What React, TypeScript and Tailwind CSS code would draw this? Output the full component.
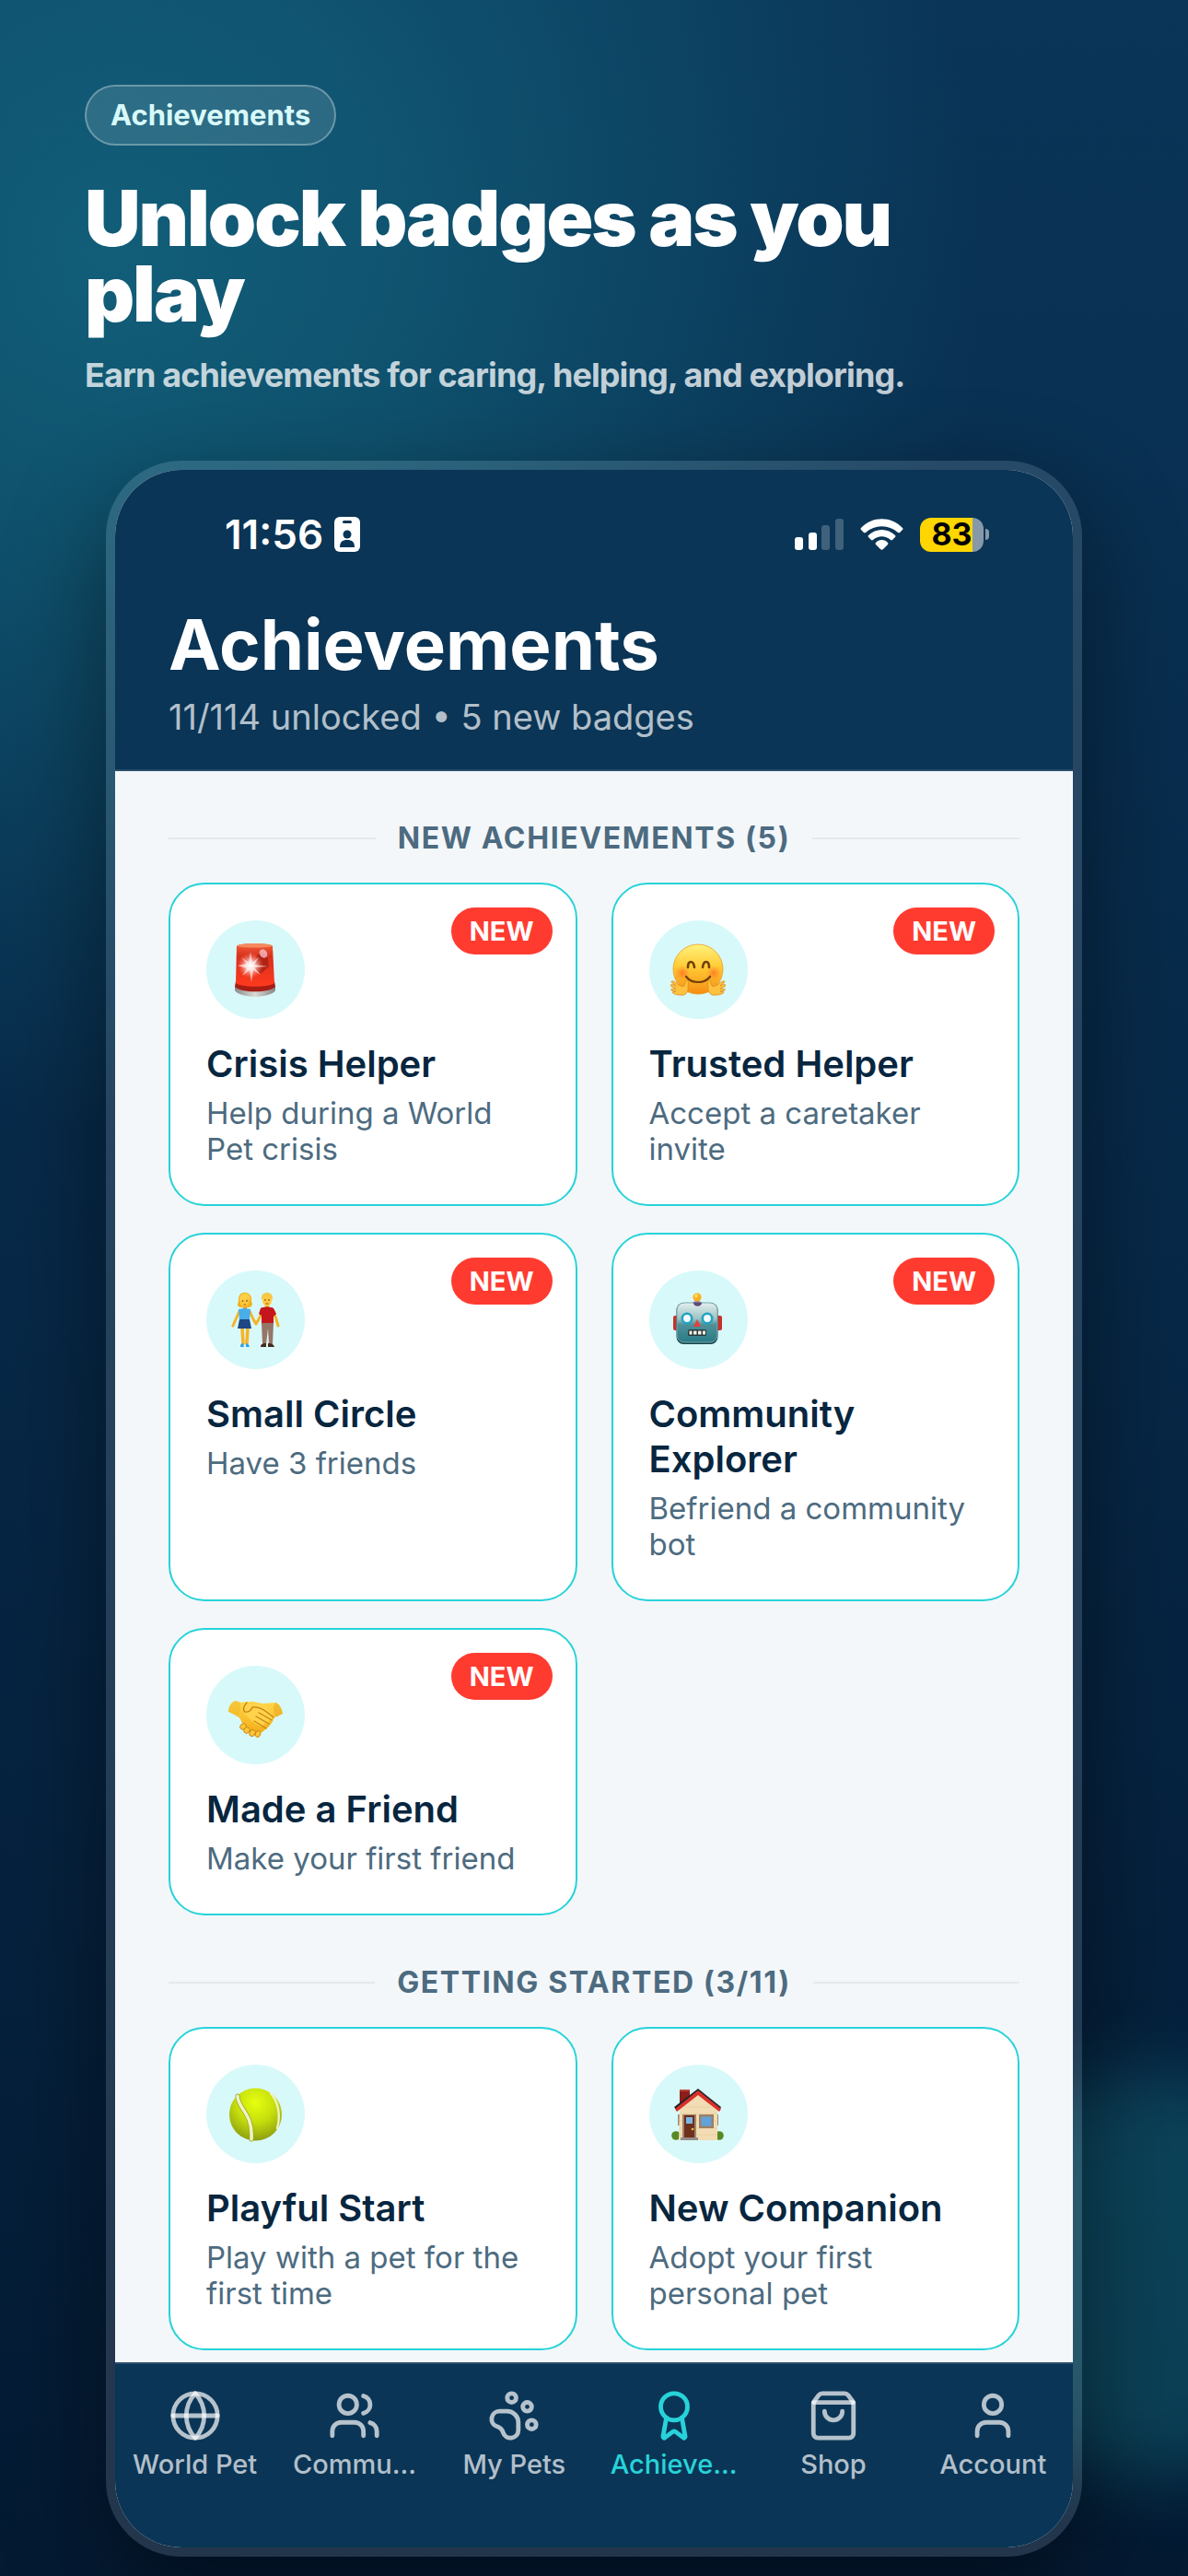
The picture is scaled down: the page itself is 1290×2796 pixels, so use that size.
import React, { useState } from "react";
import { Award, Globe, PawPrint, ShoppingBag, User } from "lucide-react";

type Achievement = {
  title: string;
  text: string;
  icon: React.ReactNode;
  isNew?: boolean;
};

function UsersIcon({ className }: { className?: string }) {
  return (
    <svg
      viewBox="0 0 24 24"
      fill="none"
      stroke="currentColor"
      strokeWidth="2"
      strokeLinecap="round"
      strokeLinejoin="round"
      className={className}
    >
      <path d="M16 21v-2a4 4 0 0 0-4-4H6a4 4 0 0 0-4 4v2" />
      <circle cx="9" cy="7" r="4" />
      <path d="M22 21v-2a4 4 0 0 0-3-3.87" />
      <path d="M16 3.13a4 4 0 0 1 0 7.75" />
    </svg>
  );
}

function Siren() {
  return (
    <svg viewBox="0 0 60 60" className="size-[60px]">
      <defs>
        <linearGradient id="sirenBody" x1="0" y1="0" x2="0" y2="1">
          <stop offset="0" stopColor="#f2603a" />
          <stop offset="0.3" stopColor="#d8301c" />
          <stop offset="1" stopColor="#ff3a1e" />
        </linearGradient>
        <linearGradient id="sirenBase" x1="0" y1="0" x2="1" y2="0">
          <stop offset="0" stopColor="#8b8b88" />
          <stop offset="0.5" stopColor="#d9d9d6" />
          <stop offset="1" stopColor="#858582" />
        </linearGradient>
        <radialGradient id="sirenGlow">
          <stop offset="0" stopColor="#fff" />
          <stop offset="0.35" stopColor="#ffd9d6" stopOpacity="0.85" />
          <stop offset="1" stopColor="#ff7a6a" stopOpacity="0" />
        </radialGradient>
      </defs>
      <path d="M7 47v5c5 9 39 9 44 0v-5z" fill="url(#sirenBase)" />
      <path d="M8 42l-1 6c6 7 38 7 44 0l-1-6z" fill="#a51d14" />
      <path d="M9 4c1-4 38-4 39 0l2 40c-6 5-36 5-42 0z" fill="url(#sirenBody)" />
      <path d="M9 4c1-4 38-4 39 0-6 2-33 2-39 0z" fill="#f58a5e" />
      <path d="M31 14c5-4 12-1 12 5l1 7-9 8-8-6z" fill="#93190f" opacity="0.6" />
      <ellipse cx="38" cy="12" rx="4" ry="5" fill="#f8c6d2" opacity="0.75" transform="rotate(-35 38 12)" />
      <circle cx="24" cy="25" r="14" fill="url(#sirenGlow)" />
      <path
        d="M24 10l2 12 7-6-5 8 15 2-15 1 7 8-8-5-2 13-2-13-8 6 5-8-10-3 10-2-6-7 8 6z"
        fill="#fff"
        opacity="0.6"
      />
    </svg>
  );
}

function HuggingFace() {
  return (
    <svg viewBox="0 0 60 60" className="size-[60px]">
      <defs>
        <linearGradient id="hugFace" x1="0" y1="0" x2="0" y2="1">
          <stop offset="0" stopColor="#fff27c" />
          <stop offset="0.45" stopColor="#ffcb35" />
          <stop offset="1" stopColor="#f78d12" />
        </linearGradient>
        <radialGradient id="hugCheek">
          <stop offset="0" stopColor="#ff6a28" stopOpacity="0.75" />
          <stop offset="1" stopColor="#ff7a28" stopOpacity="0" />
        </radialGradient>
      </defs>
      <circle cx="30" cy="29" r="27" fill="url(#hugFace)" stroke="#ee9a1c" strokeWidth="0.8" />
      <circle cx="13" cy="33" r="8" fill="url(#hugCheek)" />
      <circle cx="47" cy="33" r="8" fill="url(#hugCheek)" />
      <g fill="none" stroke="#74400a" strokeLinecap="round">
        <path d="M19 27c0-8 6-8 7 0M35 27c1-8 7-8 7 0" strokeWidth="2.6" />
        <path d="M17 37c6 8 20 8 26 0" strokeWidth="2.2" />
      </g>
      <g fill="#fbc23f" stroke="#e08a1a" strokeWidth="0.8" strokeLinejoin="round">
        <path d="M17 41c2-1 3 2 2 7 1 6-3 10-8 9-4 0-8-1-9-3l4-1-5-1c-1-2 1-2 5-2l-6-3c0-2 2-2 6 0l-5-4c0-2 2-2 8 3l5 2c2-2 2-5 3-7z" />
        <path d="M43 41c-2-1-3 2-2 7-1 6 3 10 8 9 4 0 8-1 9-3l-4-1 5-1c1-2-1-2-5-2l6-3c0-2-2-2-6 0l5-4c0-2-2-2-8 3l-5 2c-2-2-2-5-3-7z" />
      </g>
    </svg>
  );
}

function Couple() {
  return (
    <svg viewBox="0 0 60 60" className="size-[60px]">
      <g fill="none" stroke="#f6b427" strokeLinecap="round" strokeLinejoin="round">
        <path d="M12 20L8 29 5 36M23 20l4 9 3 5M37 20l-4 9-3 5M49 20l3 9 2 7" strokeWidth="3" />
        <path d="M15 38l1 17M21 38l-1 17" strokeWidth="3.6" />
      </g>
      <path d="M11 10c-1-9 4-10 7-10s8 2 7 10c2 3 0 6-3 6h-8c-4 0-5-3-3-6z" fill="#f2b01c" />
      <path d="M16 13h4v5h-4z" fill="#e89d1c" />
      <ellipse cx="17.500" cy="9.500" rx="4.800" ry="6" fill="#ffc93c" />
      <path d="M12 9c3 0 7-2 8-5 1 3 3 4 4 5 0-6-3-8-6-8s-6 2-6 8z" fill="#fcd049" />
      <path d="M11 18c3-1 10-1 13 0l-1 12H12z" fill="#47aeea" />
      <path d="M12 29h11l2 10H10z" fill="#1e4784" />
      <path d="M13 59c0-3 1-4 3-4l1 4zM19 59v-4c2 0 3 1 4 4z" fill="#2fa3e0" />
      <path d="M40 12h4v6h-4z" fill="#e89d1c" />
      <ellipse cx="42" cy="8.500" rx="5" ry="6.500" fill="#ffc93c" />
      <path d="M36 8c-1-6 3-8 6-8s7 2 6 8c-2-3-9-4-12 0z" fill="#f7c747" />
      <path d="M35 17c3-2 11-2 14 0l3 6-3 3v7H36v-8l-3-2z" fill="#c4161c" />
      <path d="M36 33h13l-1 23h-4l-1-17-2 17h-4z" fill="#957667" />
      <path d="M35 59c0-3 2-4 6-4v4zM43 55c4 0 6 1 7 4h-7z" fill="#46291f" />
      <g fill="#5a3512">
        <circle cx="15.500" cy="9" r="0.800" />
        <circle cx="20" cy="9" r="0.800" />
        <circle cx="40" cy="8" r="0.800" />
        <circle cx="44" cy="8" r="0.800" />
      </g>
      <path d="M16.500 13h2.500M40.500 12h3" stroke="#a23a18" strokeWidth="0.900" />
    </svg>
  );
}

function Robot() {
  return (
    <svg viewBox="0 0 60 60" className="size-[60px]">
      <defs>
        <linearGradient id="robotHead" x1="0" y1="0" x2="0" y2="1">
          <stop offset="0" stopColor="#e2efee" />
          <stop offset="0.4" stopColor="#9fc3c4" />
          <stop offset="0.55" stopColor="#4f909a" />
          <stop offset="1" stopColor="#277b86" />
        </linearGradient>
      </defs>
      <rect x="3" y="25" width="6" height="16" rx="2" fill="#c4322c" />
      <rect x="50" y="25" width="6" height="16" rx="2" fill="#c4322c" />
      <path d="M23 13c0-5 12-5 12 0z" fill="#73518c" />
      <circle cx="29" cy="5" r="4.600" fill="#fbae22" />
      <circle cx="28" cy="3.500" r="2" fill="#ffe05a" />
      <rect x="6.500" y="11" width="45" height="45" rx="8" fill="#15464f" />
      <rect x="7" y="11" width="44" height="43" rx="8" fill="url(#robotHead)" stroke="#7fa5a6" />
      <path d="M25 11h9c0 5-9 5-9 0z" fill="#5d4a77" />
      <g fill="#f6fdff" stroke="#1fa3c6" strokeWidth="2.600">
        <circle cx="18" cy="28" r="5.200" />
        <circle cx="40" cy="28" r="5.200" />
      </g>
      <path d="M29 29l4 8h-8z" fill="#e5413a" />
      <rect x="19" y="40" width="20" height="7" rx="1.500" fill="#243b40" />
      <path d="M20.500 41.500h3v4h-3zM25 41.500h3.500v4H25zM30 41.500h3.500v4H30zM35 41.500h3v4h-3z" fill="#f3efdf" />
    </svg>
  );
}

function Handshake() {
  return (
    <svg viewBox="0 0 60 60" className="size-[60px]">
      <defs>
        <linearGradient id="shakeSkin" x1="0" y1="0" x2="0" y2="1">
          <stop offset="0" stopColor="#ffd84a" />
          <stop offset="1" stopColor="#f3ac18" />
        </linearGradient>
      </defs>
      <path
        d="M8 14c3 2 7 2 13 1l15 2 16-1c4 2 6 7 7 12-4 2-7 3-9 4-2 6-6 11-12 15-4 3-9 5-14 1-5-3-8-7-11-14-3-4-8-6-13-8 0-6 3-11 8-12z"
        fill="url(#shakeSkin)"
      />
      <path
        d="M17 23c1-5 5-9 10-8 8 1 14 3 17 8 3 4 5 8 3 11-1 2-3 1-3 1 0 3-2 5-5 3 0 3-3 5-6 3-6-3-11-8-16-14z"
        fill="#ffd34a"
      />
      <path
        d="M20 16c-3 3-5 8-2 10 4 1 7-2 8-5 7-1 12 2 18 7l5 4M30 31l14 8M28 36l13 8M33 27l14 8"
        fill="none"
        stroke="#c98212"
        strokeWidth="1.300"
        strokeLinecap="round"
        strokeLinejoin="round"
      />
      <path d="M8 14c-5 2-7 6-8 12 4 2 8 4 10 6 3-5 4-12 2-17z" fill="#e9a81d" opacity="0.35" />
      <g fill="#fcc635" stroke="#c98212" strokeWidth="0.900">
        <ellipse cx="16" cy="42" rx="3.500" ry="3" transform="rotate(-40 16 42)" />
        <ellipse cx="20" cy="46" rx="3.500" ry="3" transform="rotate(-45 20 46)" />
        <ellipse cx="26" cy="49" rx="3.500" ry="3" transform="rotate(-60 26 49)" />
        <ellipse cx="32" cy="50" rx="3.500" ry="2.800" transform="rotate(-70 32 50)" />
      </g>
      <path d="M51 16c-3 4-2 11 1 16l7-4c-1-5-3-10-8-12z" fill="#e39a14" opacity="0.4" />
    </svg>
  );
}

function TennisBall() {
  return (
    <svg viewBox="0 0 60 60" className="size-[60px]">
      <defs>
        <radialGradient id="ball" cx="0.5" cy="0.28" r="0.75">
          <stop offset="0" stopColor="#e6ff10" />
          <stop offset="0.5" stopColor="#c5de0c" />
          <stop offset="1" stopColor="#8a9a10" />
        </radialGradient>
      </defs>
      <circle cx="29.500" cy="30" r="28.500" fill="url(#ball)" />
      <g fill="none" strokeLinecap="round">
        <path d="M10 10c0 14 17 18 15 47" stroke="#93a512" strokeWidth="5" />
        <path d="M10 10c0 14 17 18 15 47" stroke="#eef2c4" strokeWidth="3.600" />
        <path d="M46 7c8 9 11 24 7 38" stroke="#eef2c4" strokeWidth="2.400" />
      </g>
    </svg>
  );
}

function House() {
  return (
    <svg viewBox="0 0 60 60" className="size-[60px]">
      <circle cx="6" cy="53" r="4.800" fill="#578a24" />
      <circle cx="53" cy="53" r="4.800" fill="#578a24" />
      <path d="M8 30h2v12H8zM50 30h2v12h-2z" fill="#a08a70" />
      <path d="M10 22L30 6l21 16v36H9z" fill="#f2dcb4" />
      <path d="M10 29h41M10 37h41M10 45h41M10 52h41M16 22h28" stroke="#e4c998" strokeWidth="0.600" />
      <path d="M10 3h11v9L10 20z" fill="#8d1d18" />
      <path d="M10 3h11v2H10z" fill="#b8443a" />
      <path d="M4 22L30 2l25 20-2 4-23-18L7 26z" fill="#25242a" />
      <path d="M5 24L30 4l25 20-2 3-23-18L7 27z" fill="#d8302a" />
      <path d="M13 30h15v27H13z" fill="#a08468" />
      <path d="M15 31h11v24H15z" fill="#6e2f1c" />
      <path d="M17 33h7v7h-7z" fill="#7cb7e6" />
      <circle cx="24" cy="46" r="1.300" fill="#f1c13c" />
      <path d="M31 30h16v15H31z" fill="#9b8168" />
      <path d="M33.500 32.500h11v10h-11z" fill="#62a2da" />
      <path d="M11 55h19v3H11z" fill="#938d88" />
    </svg>
  );
}

const newAchievements: Achievement[] = [
  { title: "Crisis Helper", text: "Help during a World Pet crisis", icon: <Siren />, isNew: true },
  { title: "Trusted Helper", text: "Accept a caretaker invite", icon: <HuggingFace />, isNew: true },
  { title: "Small Circle", text: "Have 3 friends", icon: <Couple />, isNew: true },
  { title: "Community Explorer", text: "Befriend a community bot", icon: <Robot />, isNew: true },
  { title: "Made a Friend", text: "Make your first friend", icon: <Handshake />, isNew: true },
];

const gettingStarted: Achievement[] = [
  { title: "Playful Start", text: "Play with a pet for the first time", icon: <TennisBall /> },
  { title: "New Companion", text: "Adopt your first personal pet", icon: <House /> },
];

const tabs = [
  { label: "World Pet", icon: Globe },
  { label: "Commu...", icon: UsersIcon },
  { label: "My Pets", icon: PawPrint },
  { label: "Achieve...", icon: Award },
  { label: "Shop", icon: ShoppingBag },
  { label: "Account", icon: User },
];

function StatusBar() {
  return (
    <div className="flex items-center justify-between pt-10 pr-[91px] pl-[119px]">
      <div className="flex h-[60px] items-center gap-3 text-[44px] font-semibold">
        <span>11:56</span>
        <svg viewBox="0 0 28 38" className="h-[38px] w-7">
          <rect width="28" height="38" rx="6" fill="#fff" />
          <rect x="9" y="4" width="10" height="3" rx="1.500" fill="#0a3556" />
          <circle cx="14" cy="19" r="4.500" fill="#0a3556" />
          <path d="M6 33c0-6 3-8 8-8s8 2 8 8z" fill="#0a3556" />
        </svg>
      </div>
      <div className="flex items-center gap-[18px]">
        <svg viewBox="0 0 53 34" className="h-[34px] w-[53px]" fill="#fff">
          <rect x="0" y="20" width="9" height="14" rx="3" />
          <rect x="15" y="15" width="9" height="19" rx="3" />
          <rect x="29" y="7" width="9" height="27" rx="3" opacity="0.22" />
          <rect x="44" y="0" width="9" height="34" rx="3" opacity="0.22" />
        </svg>
        <svg viewBox="0 0 47 34" className="h-[34px] w-[47px]" fill="#fff">
          <path d="M1 10C13-3 34-3 46 10c1 1 0 2 0 2l-3 3c-1 1-2 0-2 0-10-9-25-9-35 0 0 0-1 1-2 0l-3-3s-1-1 0-2z" />
          <path d="M9 18c8-8 21-8 29 0 1 1 0 2 0 2l-3 3c-1 1-2 0-2 0-6-5-13-5-19 0 0 0-1 1-2 0l-3-3s-1-1 0-2z" />
          <path d="M17 26c3-4 10-4 13 0 1 1 0 2 0 2l-5 5c-1 1-2 1-3 0l-5-5s-1-1 0-2z" />
        </svg>
        <div className="flex items-center gap-[2px]">
          <div className="flex h-[37px] w-[69px] items-center justify-center rounded-xl bg-linear-to-r from-[#ffd600] from-83% to-[#8799a9] to-83% text-[34px] leading-none font-bold text-black">
            83
          </div>
          <div className="h-3 w-1 rounded-r-full bg-[#8799a9]" />
        </div>
      </div>
    </div>
  );
}

function Card({ item }: { item: Achievement }) {
  return (
    <article className="relative rounded-[39px] border-2 border-[#27d3d9] bg-white px-[39px] pt-[39px] pb-10">
      {item.isNew && (
        <span className="absolute top-[25px] right-[25px] rounded-full bg-[#ff3b30] px-5 text-[29px] leading-[51px] font-bold text-white">
          NEW
        </span>
      )}
      <div className="flex size-[107px] items-center justify-center rounded-full bg-[#d8f9fa]">
        {item.icon}
      </div>
      <h3 className="mt-6 text-[40px] leading-[49px] font-semibold text-[#07263f]">{item.title}</h3>
      <p className="mt-[10px] text-[33px] leading-[39px] text-[#4d6b80]">{item.text}</p>
    </article>
  );
}

function Section({ title, items }: { title: string; items: Achievement[] }) {
  return (
    <section>
      <div className="mb-[29px] flex items-center gap-6">
        <div className="h-[2px] flex-1 bg-[#e4e9ec]" />
        <h2 className="text-[32px] leading-[38px] font-bold tracking-wider text-[#4d6b80] uppercase">{title}</h2>
        <div className="h-[2px] flex-1 bg-[#e4e9ec]" />
      </div>
      <div className="grid grid-cols-2 gap-x-[37px] gap-y-[29px]">
        {items.map((item) => (
          <Card key={item.title} item={item} />
        ))}
      </div>
    </section>
  );
}

function App() {
  const [active, setActive] = useState("Achieve...");

  return (
    <div className="relative min-h-screen overflow-hidden bg-[radial-gradient(circle_940px_at_130px_290px,rgba(39,211,217,0.27)_0%,rgba(39,211,217,0.2)_35%,rgba(39,211,217,0.07)_75%,rgba(39,211,217,0)_100%),linear-gradient(180deg,#0a3558_0%,#072847_50%,#041a33_100%)] pb-5 font-['Inter',sans-serif]">
      <div className="absolute -right-[180px] bottom-[106px] size-[440px] rounded-full bg-[#27d3d9]/20 blur-[40px]" />

      <header className="relative px-[92px] pt-[92px]">
        <span className="inline-block rounded-full border-2 border-white/30 bg-white/12 px-[26px] text-[31px] leading-[62px] font-bold text-[#d8f9fa]">
          Achievements
        </span>
        <h1 className="mt-[38px] max-w-[940px] text-[84px] leading-[82px] font-black tracking-tight text-white">
          Unlock badges as you play
        </h1>
        <p className="mt-6 text-[36px] leading-[46px] font-bold tracking-tight text-white/75">
          Earn achievements for caring, helping, and exploring.
        </p>
      </header>

      <div className="relative mx-[115px] mt-[70px] rounded-[82px] bg-white/12 p-[10px] shadow-[0_40px_110px_rgba(0,0,0,0.45)]">
        <div className="overflow-hidden rounded-[72px] bg-[#f3f7fa]">
          <div className="border-b-2 border-[#294d6c] bg-[#0a3556] pb-[34px] text-white">
            <StatusBar />
            <div className="px-[58px] pt-11">
              <h2 className="text-[76px] leading-[90px] font-bold">Achievements</h2>
              <p className="mt-[11px] text-[38px] leading-[46px] text-white/70">11/114 unlocked • 5 new badges</p>
            </div>
          </div>

          <main className="flex flex-col gap-[54px] px-[58px] pt-[54px] pb-[13px]">
            <Section title="New Achievements (5)" items={newAchievements} />
            <Section title="Getting Started (3/11)" items={gettingStarted} />
          </main>

          <nav className="grid grid-cols-6 border-t-2 border-[#294d6c] bg-[#0a3556] pt-[27px] pb-[73px]">
            {tabs.map((tab) => {
              const Icon = tab.icon;
              return (
                <button
                  key={tab.label}
                  type="button"
                  onClick={() => setActive(tab.label)}
                  className={
                    active === tab.label
                      ? "flex cursor-pointer flex-col items-center gap-[6px] text-[#27d3d9]"
                      : "flex cursor-pointer flex-col items-center gap-[6px] text-white/70"
                  }
                >
                  <Icon className="size-[58px]" />
                  <span className="text-[29px] leading-[35px] font-medium">{tab.label}</span>
                </button>
              );
            })}
          </nav>
        </div>
      </div>
    </div>
  );
}

export default App;
